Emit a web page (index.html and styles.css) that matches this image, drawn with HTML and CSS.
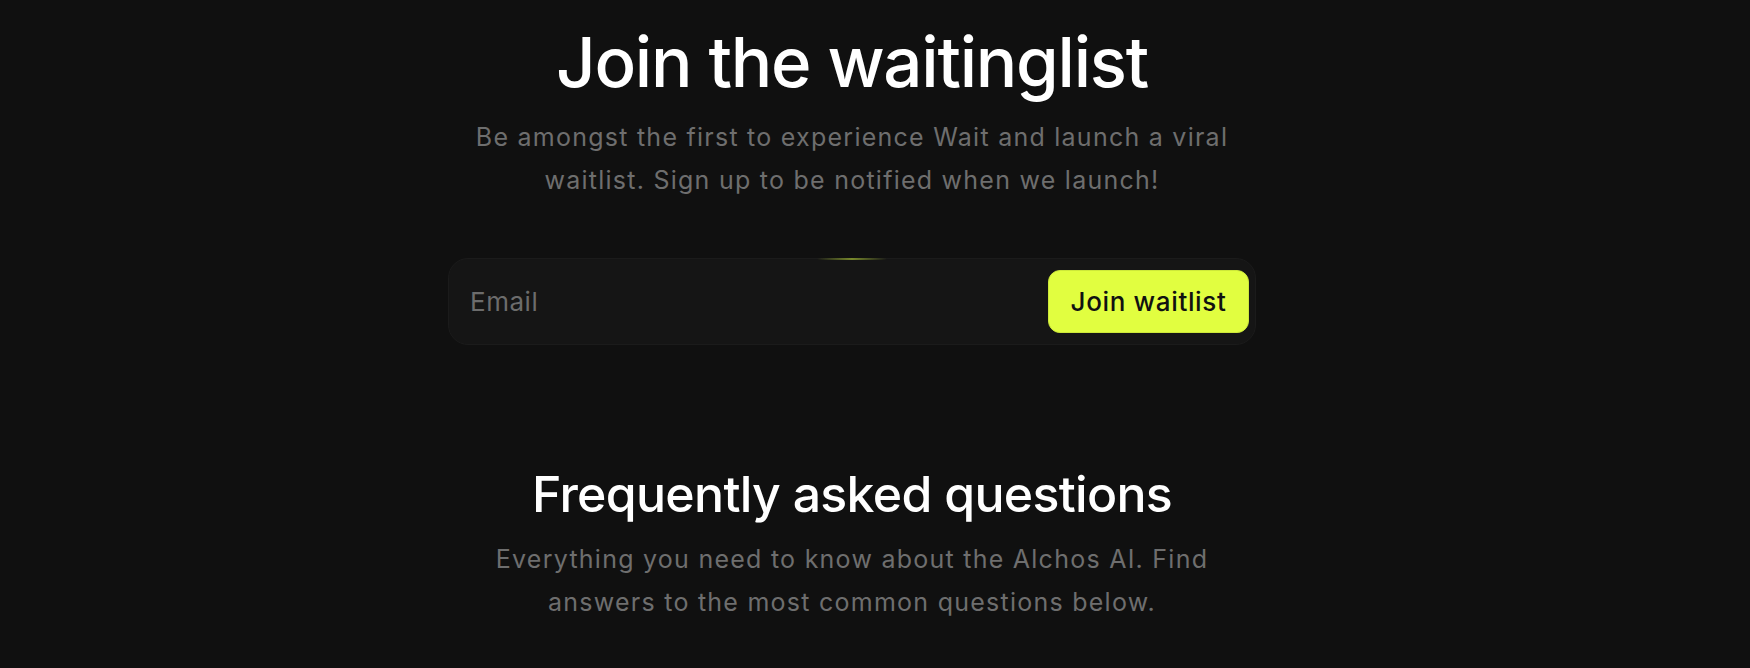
FILE: index.html
```html
<!DOCTYPE html>
<html lang="en">
<head>
<meta charset="utf-8">
<title>Join the waitinglist</title>
<link rel="stylesheet" href="styles.css">
</head>
<body>
<main class="page">
  <section class="hero">
    <h1 class="hero-title">Join the waitinglist</h1>
    <p class="hero-sub">Be amongst the first to experience Wait and launch a viral waitlist. Sign up to be notified when we launch!</p>
    <form class="signup" onsubmit="return false">
      <input class="signup-input" type="email" placeholder="Email">
      <button class="signup-btn" type="submit">Join waitlist</button>
    </form>
  </section>
  <section class="faq">
    <h2 class="faq-title">Frequently asked questions</h2>
    <p class="faq-sub">Everything you need to know about the Alchos AI. Find answers to the most common questions below.</p>
  </section>
</main>
</body>
</html>
```
FILE: styles.css
```css
* { box-sizing: border-box; }
html, body { margin: 0; padding: 0; }
body {
  background: #101010;
  font-family: Inter, "Noto Sans", sans-serif;
  color: #fff;
  height: 668px;
  overflow: hidden;
}
.page {
  display: flex;
  flex-direction: column;
  align-items: center;
  padding: 21px 46px 0 0;
}
.hero {
  display: flex;
  flex-direction: column;
  align-items: center;
}
.hero-title {
  margin: 0;
  font-size: 69px;
  line-height: 1.2;
  font-weight: 500;
  letter-spacing: -0.018em;
  color: #fff;
}
.hero-sub {
  margin: 12px 0 0;
  max-width: 780px;
  text-align: center;
  font-size: 25px;
  line-height: 43px;
  color: #6e6e6e;
  letter-spacing: 1.25px;
}
.signup {
  position: relative;
  margin-top: 56px;
  width: 808px;
  height: 87px;
  display: flex;
  align-items: center;
  justify-content: space-between;
  padding: 0 6px 0 21px;
  background: #151515;
  border: 1px solid #1b1b1b;
  border-radius: 20px;
}
.signup::before {
  content: "";
  position: absolute;
  top: -1px;
  left: 50%;
  width: 70px;
  margin-left: -35px;
  height: 2px;
  background: linear-gradient(90deg, rgba(200,230,60,0), rgba(200,230,60,0.55), rgba(200,230,60,0));
  filter: blur(0.5px);
}
.signup-input {
  flex: 1;
  background: transparent;
  border: 0;
  outline: none;
  font-family: inherit;
  font-size: 26px;
  color: #fff;
  padding: 0;
  letter-spacing: 0.02em;
}
.signup-input::placeholder { color: #6c6c6c; }
.signup-btn {
  height: 63px;
  width: 201px;
  border-radius: 12px;
  border: 1px solid #cde83a;
  background: #e1fe40;
  color: #111;
  font-family: inherit;
  font-size: 26px;
  font-weight: 500;
  letter-spacing: 0.025em;
  cursor: pointer;
}
.faq {
  margin-top: 119px;
  display: flex;
  flex-direction: column;
  align-items: center;
}
.faq-title {
  margin: 0;
  font-size: 50px;
  line-height: 1.2;
  font-weight: 500;
  letter-spacing: -0.014em;
  color: #fff;
}
.faq-sub {
  margin: 14px 0 0;
  max-width: 770px;
  text-align: center;
  font-size: 25px;
  line-height: 43px;
  color: #6e6e6e;
  letter-spacing: 1.25px;
}
```
